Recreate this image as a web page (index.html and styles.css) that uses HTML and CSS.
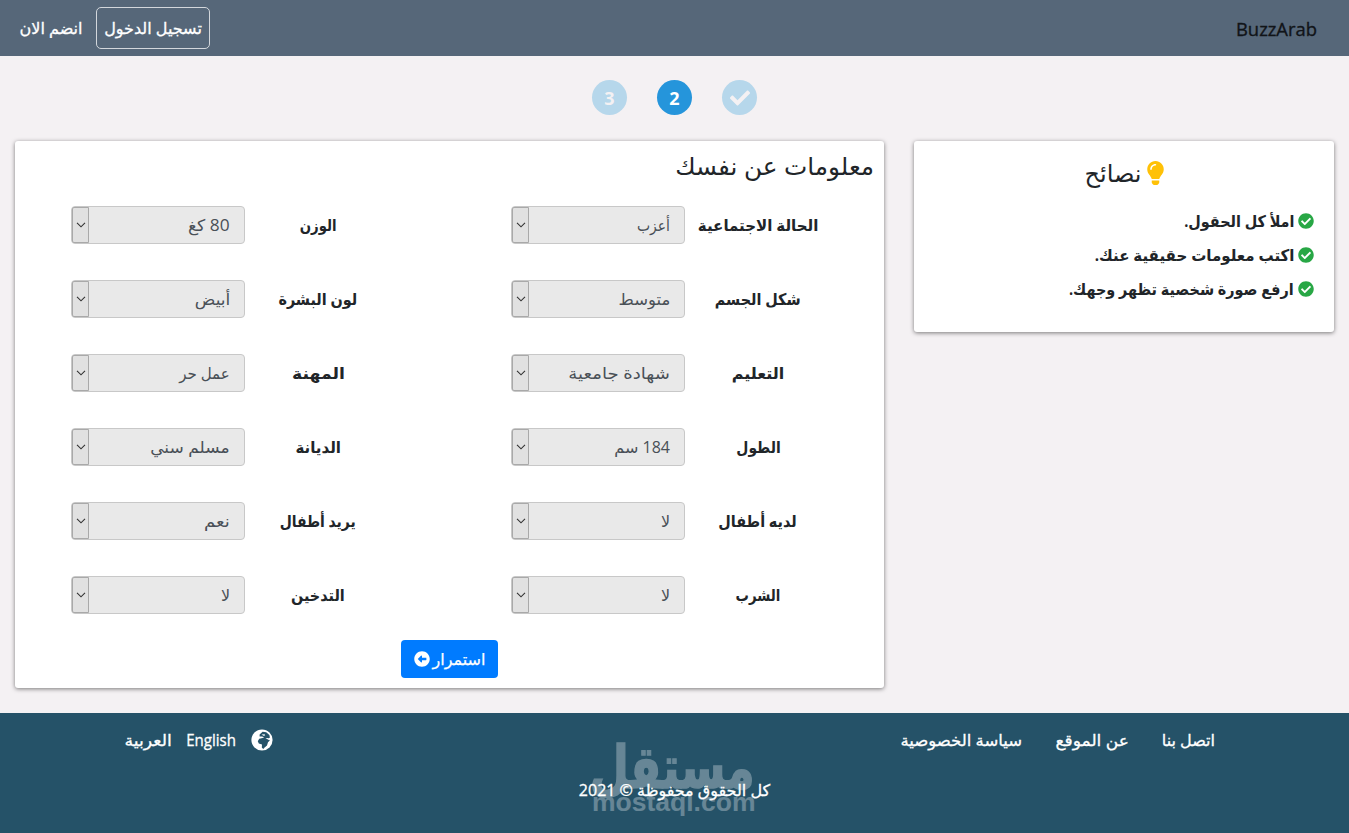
FILE: index.html
```html
<!DOCTYPE html>
<html lang="ar" dir="rtl">
<head>
<meta charset="utf-8">
<title>BuzzArab</title>
<link rel="stylesheet" href="styles.css">
</head>
<body>
<svg class="sprite" width="0" height="0">
  <symbol id="check" viewBox="0 0 512 512"><path d="M173.898 439.404l-166.4-166.4c-9.997-9.997-9.997-26.206 0-36.204l36.203-36.204c9.997-9.998 26.207-9.998 36.204 0L192 312.69 432.095 72.596c9.997-9.997 26.207-9.997 36.204 0l36.203 36.204c9.997 9.997 9.997 26.206 0 36.204l-294.4 294.401c-9.998 9.997-26.207 9.997-36.204-.001z"/></symbol>
  <symbol id="check-circle" viewBox="0 0 512 512"><path d="M504 256c0 136.967-111.033 248-248 248S8 392.967 8 256 119.033 8 256 8s248 111.033 248 248zM227.314 387.314l184-184c6.248-6.248 6.248-16.379 0-22.627l-22.627-22.627c-6.248-6.249-16.379-6.249-22.628 0L216 308.118l-70.059-70.059c-6.248-6.248-16.379-6.248-22.628 0l-22.627 22.627c-6.248 6.248-6.248 16.379 0 22.627l104 104c6.249 6.249 16.379 6.249 22.628.001z"/></symbol>
  <symbol id="bulb" viewBox="0 0 352 512"><path d="M96.06 454.35c.01 6.29 1.87 12.45 5.36 17.69l17.09 25.69a31.99 31.99 0 0 0 26.64 14.28h61.71a31.99 31.99 0 0 0 26.64-14.28l17.09-25.69a31.989 31.989 0 0 0 5.36-17.69l.04-38.35H96.01l.05 38.35zM0 176c0 44.37 16.45 84.85 43.56 115.78 16.52 18.85 42.36 58.23 52.21 91.45.04.26.07.52.11.78h160.24c.04-.26.07-.51.11-.78 9.85-33.22 35.69-72.6 52.21-91.45C335.55 260.85 352 220.37 352 176 352 78.61 272.91-.3 175.45 0 73.44.31 0 82.97 0 176zm176-80c-44.11 0-80 35.89-80 80 0 8.84-7.16 16-16 16s-16-7.16-16-16c0-61.76 50.24-112 112-112 8.84 0 16 7.16 16 16s-7.16 16-16 16z"/></symbol>
  <symbol id="arrow-circle" viewBox="0 0 512 512"><path fill-rule="evenodd" d="M256 504C119 504 8 393 8 256S119 8 256 8s248 111 248 248-111 248-248 248zM384 212H256v-46c0-18-22-27-34-14l-94 93a16 16 0 0 0 0 22l94 93c12 13 34 4 34-14v-54h128c7 0 12-5 12-12v-56c0-7-5-12-12-12z"/></symbol>
  <symbol id="globe" viewBox="0 0 22 22"><circle cx="11" cy="11" r="10.6" fill="#fff"/><path fill="#255268" d="M8.6 5.6 11.6 2.8 15.2 3.2 18.4 6 18.9 8.6 17.6 9.6 18.8 11.6 17 13.2 16 16.4 13.6 18.6 12.2 20 10.8 18.6 11 15.6 7.8 14.4 6.8 12.2 8.2 9.8 11.6 9 13.2 8.2 11 7.4 8.6 7.6z"/><path fill="#fff" d="M10.6 5.4 13.6 5.2 14.2 6.4 12.4 6.8zM14.4 9.4 17 9 19 10.2 18.2 11.2 16.6 10.2z"/></symbol>
  <symbol id="chevron" viewBox="0 0 10 6"><path fill="none" stroke="#333" stroke-width="1.1" d="M1 .8 5 4.8 9 .8"/></symbol>
</svg>

<header class="navbar">
  <a class="brand"><span class="t">BuzzArab</span></a>
  <nav class="account">
    <a class="login"><span class="t">تسجيل الدخول</span></a>
    <a class="join"><span class="t">انضم الان</span></a>
  </nav>
</header>

<div class="steps">
  <span class="step"><svg class="step-check"><use href="#check"/></svg></span>
  <span class="step active">2</span>
  <span class="step">3</span>
</div>

<main class="content">
  <aside class="card tips">
    <h2 class="tips-title"><svg class="bulb"><use href="#bulb"/></svg><span class="t">نصائح</span></h2>
    <ul class="tip-list">
      <li><svg class="ok"><use href="#check-circle"/></svg><span class="t w90">املأ كل الحقول.</span></li>
      <li><svg class="ok"><use href="#check-circle"/></svg><span class="t w94">اكتب معلومات حقيقية عنك.</span></li>
      <li><svg class="ok"><use href="#check-circle"/></svg><span class="t w90">ارفع صورة شخصية تظهر وجهك.</span></li>
    </ul>
  </aside>

  <section class="card form">
    <h2 class="form-title"><span class="t w103">معلومات عن نفسك</span></h2>
    <div class="fields">
      <div class="field"><b><span class="t w94">الحالة الاجتماعية</span></b><div class="select"><span class="t w87">أعزب</span><i><svg><use href="#chevron"/></svg></i></div></div>
      <div class="field"><b><span class="t w83">الوزن</span></b><div class="select"><span class="t w108">80 كغ</span><i><svg><use href="#chevron"/></svg></i></div></div>
      <div class="field"><b><span class="t w90">شكل الجسم</span></b><div class="select"><span class="t w103">متوسط</span><i><svg><use href="#chevron"/></svg></i></div></div>
      <div class="field"><b><span class="t w90">لون البشرة</span></b><div class="select"><span class="t w106">أبيض</span><i><svg><use href="#chevron"/></svg></i></div></div>
      <div class="field"><b><span class="t">التعليم</span></b><div class="select"><span class="t w113">شهادة جامعية</span><i><svg><use href="#chevron"/></svg></i></div></div>
      <div class="field"><b><span class="t w108">المهنة</span></b><div class="select"><span class="t w94">عمل حر</span><i><svg><use href="#chevron"/></svg></i></div></div>
      <div class="field"><b><span class="t w87">الطول</span></b><div class="select"><span class="t">184 سم</span><i><svg><use href="#chevron"/></svg></i></div></div>
      <div class="field"><b><span class="t w94">الديانة</span></b><div class="select"><span class="t w106">مسلم سني</span><i><svg><use href="#chevron"/></svg></i></div></div>
      <div class="field"><b><span class="t w90">لديه أطفال</span></b><div class="select"><span class="t">لا</span><i><svg><use href="#chevron"/></svg></i></div></div>
      <div class="field"><b><span class="t w87">يريد أطفال</span></b><div class="select"><span class="t w113">نعم</span><i><svg><use href="#chevron"/></svg></i></div></div>
      <div class="field"><b><span class="t w83">الشرب</span></b><div class="select"><span class="t">لا</span><i><svg><use href="#chevron"/></svg></i></div></div>
      <div class="field"><b><span class="t w90">التدخين</span></b><div class="select"><span class="t">لا</span><i><svg><use href="#chevron"/></svg></i></div></div>
    </div>
    <button class="next"><span class="t">استمرار</span><svg><use href="#arrow-circle"/></svg></button>
  </section>
</main>

<footer class="footer">
  <div class="footer-row">
    <nav class="links">
      <a class="contact"><span class="t">اتصل بنا</span></a>
      <a class="about"><span class="t w106">عن الموقع</span></a>
      <a class="privacy"><span class="t w103">سياسة الخصوصية</span></a>
    </nav>
    <div class="langs">
      <svg class="globe"><use href="#globe"/></svg>
      <a class="en"><span class="t w94">English</span></a>
      <a class="ar"><span class="t w108">العربية</span></a>
    </div>
  </div>
  <p class="copy"><span class="t">كل الحقوق محفوظة © 2021</span></p>
  <div class="watermark"><span class="wm-ar">مستقل</span><span class="wm-en" dir="ltr">mostaql.com</span></div>
</footer>
</body>
</html>
```
FILE: styles.css
```css
* { box-sizing: border-box; }
body { margin: 0; background: #f4f1f3; color: #212529; font: 16px/24px "Open Sans", "DejaVu Sans", sans-serif; }
h2, p, ul { margin: 0; padding: 0; font-weight: 400; list-style: none; }
.sprite { position: absolute; }
svg { fill: currentColor; flex: none; display: block; }

/* condensed and extended text widths */
.t { display: inline-block; white-space: nowrap; transform-origin: right center; }
.field b .t { transform-origin: center; }
.w83 { transform: scaleX(.83); }
.w87 { transform: scaleX(.87); }
.w90 { transform: scaleX(.9); }
.w94 { transform: scaleX(.94); }
.w103 { transform: scaleX(1.03); }
.w106 { transform: scaleX(1.065); }
.w108 { transform: scaleX(1.08); }
.w113 { transform: scaleX(1.13); }

.navbar { height: 56px; background: #566779; display: flex; justify-content: space-between; align-items: center; padding: 0 32px 0 20px; }
.brand { font-size: 18.4px; color: #111418; padding-top: 2px; -webkit-text-stroke: .35px; }
.account { display: flex; align-items: center; gap: 14px; color: #fff; -webkit-text-stroke: .3px; }
.login { width: 114px; height: 42px; border: 1px solid #d3d7dc; border-radius: 5px; display: flex; align-items: center; justify-content: center; }
.join { width: 62px; display: flex; justify-content: center; }

.steps { display: flex; justify-content: center; gap: 30px; padding-top: 24px; height: 85px; }
.step { width: 35px; height: 35px; border-radius: 50%; background: #b6d7eb; color: #f4f1f3; font-weight: 700; font-size: 18px; display: flex; align-items: center; justify-content: center; }
.step.active { background: #2595db; color: #fff; }
.step-check { width: 20px; height: 20px; }

.content { display: flex; align-items: flex-start; gap: 30px; padding: 0 15px; height: 572px; }
.card { background: #fff; border-radius: 3px; box-shadow: 0 1px 4px rgba(0, 0, 0, .5); }
.tips { width: 420px; height: 191px; padding: 16px 20px 0; }
.tips-title { display: flex; justify-content: center; align-items: center; gap: 5px; font-size: 24px; line-height: 32px; }
.bulb { width: 17px; height: 24px; color: #ffc107; }
.tip-list { padding-top: 20px; font-weight: 700; }
.tip-list li { display: flex; align-items: center; gap: 4px; height: 24px; margin-bottom: 10px; }
.ok { width: 16px; height: 16px; color: #28a745; }

.form { width: 869px; height: 547px; padding: 9px 10px 0; }
.form-title { font-size: 24px; line-height: 32px; height: 56px; }
.fields { display: grid; grid-template-columns: 320px 320px; column-gap: 120px; row-gap: 36px; padding-right: 43px; }
.field { display: flex; height: 38px; }
.field b { width: 146px; display: flex; align-items: center; justify-content: center; }
.select { width: 174px; border: 1px solid #c8c8c8; border-radius: 4px; background: #e9e9e9; color: #495057; display: flex; align-items: center; justify-content: space-between; padding-right: 14px; }
.select i { width: 17px; height: 36px; border: 1px solid #a9a9a9; border-radius: 2px 0 0 2px; background: #e1e1e1; display: flex; align-items: center; justify-content: center; }
.select i svg { width: 10px; height: 6px; }
.next { display: flex; align-items: center; justify-content: center; gap: 3px; width: 97px; height: 38px; margin: 26px auto 0; border: 0; border-radius: 4px; background: #007bff; color: #fff; font: inherit; -webkit-text-stroke: .25px; }
.next svg { width: 16px; height: 16px; }

.footer { position: relative; height: 120px; background: #255268; color: #fff; padding-top: 15px; -webkit-text-stroke: .3px; }
.footer-row { display: flex; justify-content: space-between; padding: 0 134px 0 124px; }
.links { display: flex; gap: 33px; }
.privacy { margin-right: 5px; }
.langs { display: flex; align-items: center; }
.globe { width: 22px; height: 22px; margin-left: 15px; }
.en { margin-left: 11px; }
.ar { padding-left: 4px; }
.copy { text-align: center; padding-top: 26px; }
.watermark { position: absolute; left: 592px; top: 20px; width: 164px; color: #fff; opacity: .3; font-weight: 700; -webkit-text-stroke: 0; }
.wm-ar { position: absolute; right: 1px; top: -3px; font-size: 59px; line-height: 70px; transform: scaleX(.765); transform-origin: right center; -webkit-text-stroke: 1.5px; }
.wm-en { position: absolute; left: 0; top: 54px; font: 700 26.5px/30px "Liberation Sans", sans-serif; }
```
